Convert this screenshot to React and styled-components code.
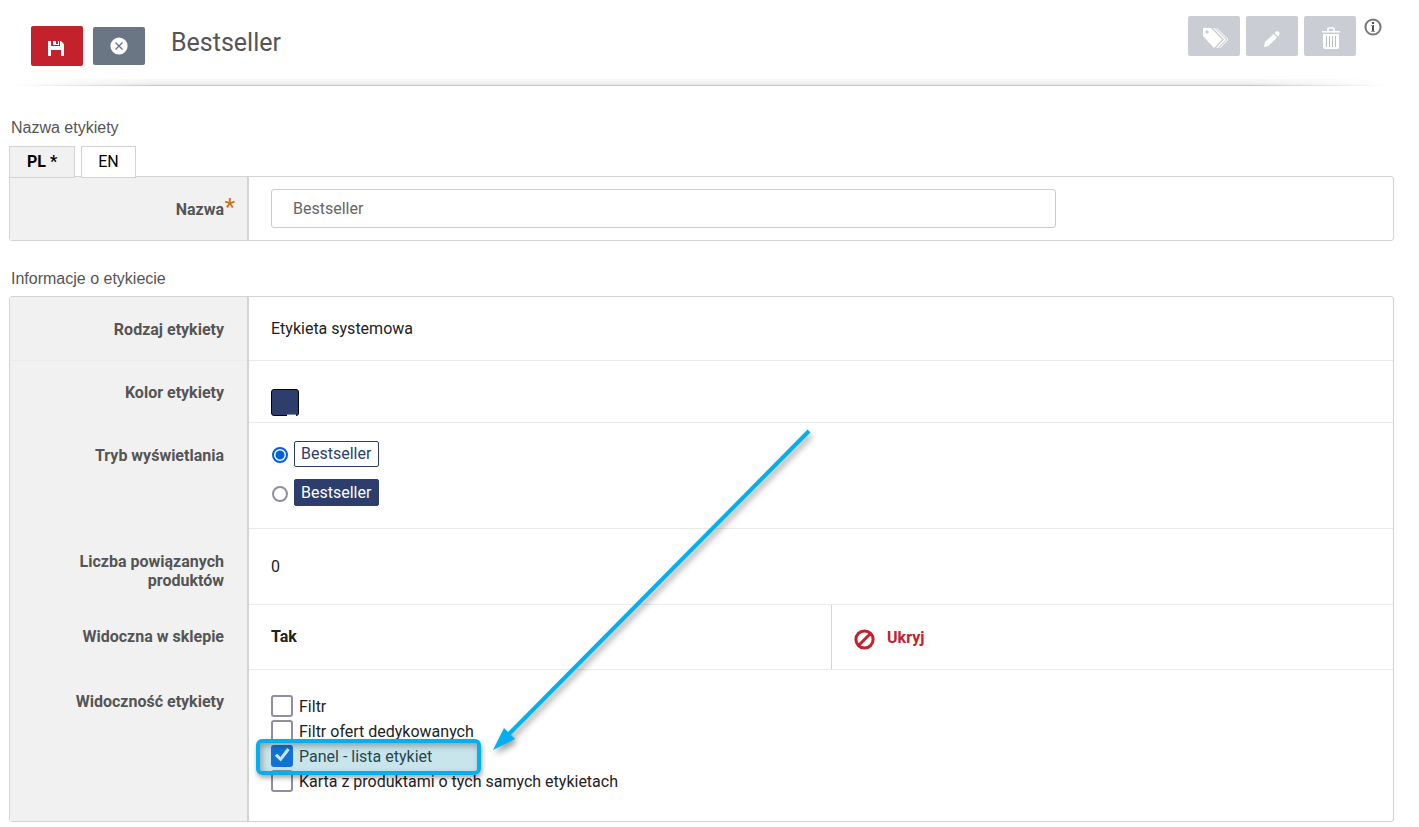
import React, { useState } from "react";
import styled, { createGlobalStyle, css } from "styled-components";

const GlobalStyle = createGlobalStyle`
  *, *::before, *::after { box-sizing: border-box; }
  body {
    margin: 0;
    background: #fff;
    color: #222;
    font: 16px/19px Roboto, "Open Sans", sans-serif;
  }
  button, input { font: inherit; }
`;

const Page = styled.div`
  overflow: hidden;
`;

const Header = styled.header`
  position: relative;
  display: flex;
  align-items: flex-start;
  height: 86px;
  padding: 0 37px 0 31px;

  &::after {
    content: "";
    position: absolute;
    inset: auto 0 0 0;
    height: 7px;
    border-bottom: 1px solid #c8c8c8;
    background: linear-gradient(#f7f7f7, #f3f3f3 60%, #e4e4e4);
    mask-image: linear-gradient(90deg, transparent 1%, #000 11%, #000 88%, transparent 98%);
  }
`;

const Actions = styled.div`
  display: flex;
  align-items: center;
  gap: ${(p) => p.$gap}px;
  padding-top: ${(p) => p.$top}px;
`;

const tones = { save: "#c3222d", cancel: "#6b7684", muted: "#caced4" };

const IconButton = styled.button`
  display: flex;
  align-items: center;
  justify-content: center;
  width: 52px;
  height: ${(p) => (p.$tone === "cancel" ? 38 : 40)}px;
  padding: ${(p) => (p.$tone === "muted" ? "4px 0 0 2px" : p.$tone === "save" ? "4px 2px 0 0" : "0")};
  border: 0;
  border-radius: 2px;
  background: ${(p) => tones[p.$tone]};
  color: #fff;
  cursor: pointer;
`;

const Title = styled.h1`
  flex: 1;
  margin: 0;
  padding: 28px 0 0 26px;
  color: #555;
  font-size: 25px;
  line-height: 30px;
  font-weight: 400;
`;

const InfoButton = styled.button`
  display: flex;
  margin: 18px 0 0 8px;
  padding: 0;
  border: 0;
  background: none;
  color: #777;
  cursor: pointer;
`;

const Main = styled.main`
  padding: 32px 25px 5px 9px;
`;

const Section = styled.section`
  & + & { margin-top: 28px; }
`;

const Heading = styled.h2`
  margin: 0 0 8px 2px;
  color: #555;
  font: 16px/19px "Liberation Sans", Arial, sans-serif;
`;

const Tabs = styled.div`
  position: relative;
  z-index: 1;
  display: flex;
  gap: 6px;
  padding-top: 1px;
  margin-bottom: -2px;
`;

const Tab = styled.button`
  height: 32px;
  padding: 0 ${(p) => (p.$active ? 17 : 16)}px 2px;
  border: 1px solid #d3d3d3;
  background: ${(p) => (p.$active ? "#f1f1f1" : "#fff")};
  color: #000;
  font-weight: ${(p) => (p.$active ? 700 : 400)};
  cursor: pointer;
`;

const Panel = styled.div`
  border: 1px solid #d3d3d3;
  border-radius: 3px;
`;

const Row = styled.div`
  display: flex;
  min-height: ${(p) => p.$height}px;
`;

const labelStyle = css`
  flex: none;
  width: 239px;
  padding: ${(p) => p.$top ?? 23}px 23px 0 50px;
  border-right: 2px solid #d3d3d3;
  background: #f1f1f1;
  color: #555;
  font-weight: 700;
  text-align: right;
`;
const RowLabel = styled.div`
  ${labelStyle}
  box-shadow: ${(p) => (p.$ruled ? "inset 0 -1px #ebebeb" : "none")};
`;
const FieldLabel = styled.label`
  ${labelStyle}
  display: flex;
  justify-content: flex-end;
  padding-right: 12px;
`;

const Required = styled.span`
  width: 11px;
  color: #d06a10;
  font-size: 24px;
  line-height: 14px;
  font-weight: 400;
`;

const Value = styled.div`
  position: relative;
  flex: ${(p) => p.$share ?? 1} 1 0;
  min-width: 0;
  padding: ${(p) => p.$top}px 23px 0 22px;
  border-left: ${(p) => (p.$divided ? "1px solid #d3d3d3" : "0")};
  font-weight: ${(p) => (p.$bold ? 700 : 400)};
  border-bottom: 1px solid #ebebeb;
  ${Row}:last-child > & { border-bottom: 0; }
`;

const TextInput = styled.input`
  display: block;
  width: 100%;
  max-width: 785px;
  height: 39px;
  padding: 0 21px;
  border: 1px solid #ccc;
  border-radius: 3px;
  background: #fff;
  color: #666;
`;

const Swatch = styled.button`
  position: relative;
  display: block;
  width: 28px;
  height: 27px;
  padding: 0;
  border: 1px solid #000;
  border-radius: 3px;
  background: #2d3e6d;
  cursor: pointer;

  &::after {
    content: "";
    position: absolute;
    right: 2px;
    bottom: -1px;
    width: 9px;
    height: 2px;
    border-top: 1px solid #8088a5;
    background: #fff;
  }
`;

const ModeOption = styled.label`
  display: flex;
  align-items: center;
  gap: 6px;
  width: max-content;
  & + & { margin-top: 12px; }
`;

const Radio = styled.input`
  appearance: none;
  width: 16px;
  height: 16px;
  margin: 2px 0 0 1px;
  border: 2px solid #8f8f9d;
  border-radius: 50%;
  background: #fff;
  &:checked {
    border-color: #0060df;
    background: radial-gradient(circle, #0060df 4px, #fff 5px);
  }
`;

const Badge = styled.span`
  padding: 3px 7px 3px 6px;
  border: 1px solid #2d3e6d;
  border-radius: 2px;
  line-height: ${(p) => (p.$filled ? 19 : 18)}px;
  background: ${(p) => (p.$filled ? "#2d3e6d" : "#fff")};
  color: ${(p) => (p.$filled ? "#fff" : "#2d3e6d")};
`;

const HideLink = styled.a`
  display: inline-flex;
  align-items: flex-start;
  gap: 12px;
  color: #c3222d;
  font-weight: 700;
  text-decoration: none;
  svg { margin-top: 1px; }
`;

const CheckOption = styled.label`
  display: flex;
  align-items: center;
  gap: 6px;
  width: max-content;
  height: 25px;
`;

const Checkbox = styled.input`
  appearance: none;
  display: grid;
  place-items: center;
  width: 22px;
  height: 22px;
  margin: 0 0 2px;
  border: 2px solid #8f8f9d;
  border-radius: 3px;
  background: #fff;
  &:checked {
    border-color: #0060df;
    background: #0060df;
  }
  &:checked::before {
    content: "";
    width: 18px;
    height: 18px;
    background: #fff;
    clip-path: polygon(10% 52%, 23% 40%, 41% 58%, 79% 9%, 93% 20%, 43% 84%);
  }
`;

const Highlight = styled.div`
  position: absolute;
  top: 69px;
  left: 7px;
  width: 225px;
  height: 36px;
  border: 4px solid #00b0f0;
  border-radius: 6px;
  background: rgba(60, 160, 185, 0.28);
  box-shadow: 1px 3px 5px rgba(0, 0, 0, 0.35), inset 2px 3px 6px rgba(0, 0, 0, 0.3);
  pointer-events: none;
`;

const Pointer = styled.svg`
  position: absolute;
  top: -250px;
  left: 235px;
  filter: drop-shadow(2px 4px 3px rgba(0, 0, 0, 0.4));
  pointer-events: none;
`;

const SaveIcon = () => (
  <svg width="16" height="16" viewBox="0 0 16 16" fill="currentColor" aria-hidden="true">
    <path d="M0 1h3v5h9V1h1l3 3v12h-3v-6H3v6H0z" />
    <path d="M5 1h3v3h2V1h1v4H5z" />
  </svg>
);
const CancelIcon = () => (
  <svg width="18" height="18" viewBox="0 0 18 18" aria-hidden="true">
    <circle cx="9" cy="9" r="8.6" fill="currentColor" />
    <path d="M5.5 5.5l7 7m0-7l-7 7" stroke="#6b7684" strokeWidth="1.4" />
  </svg>
);
const TagsIcon = () => (
  <svg width="26" height="22" viewBox="0 0 26 22" fill="currentColor" aria-hidden="true">
    <path fillRule="evenodd" d="M1 2q0-1 1-1h7l11 11.5-8 8.5L1 9zM5 3.2a1.7 1.7 0 1 0 .1 0z" />
    <path d="M11 1h1.6L24 12.500l-8 8.500h-2l8-8.500z" />
    <path d="M14 1h1l11.400 11.500-8 8.500h-1l8-8.500z" />
  </svg>
);
const PencilIcon = () => (
  <svg width="18" height="18" viewBox="0 0 18 18" fill="currentColor" aria-hidden="true">
    <path d="M0 18l1-5 8.500-8 3.500 3.500-8.500 8.500z" />
    <path d="M10.500 4l1.500-1.600q1-.8 2 0l1.300 1.300q.8 1 0 2L14 7.500z" />
  </svg>
);
const TrashIcon = () => (
  <svg width="20" height="23" viewBox="0 0 20 23" aria-hidden="true">
    <path d="M7 4V2q0-1 1-1h4q1 0 1 1v2" fill="none" stroke="currentColor" strokeWidth="1.6" />
    <path d="M1 4h18v1.500H1z" fill="currentColor" />
    <path d="M2 7h16v13q0 2-2 2H4q-2 0-2-2z" fill="currentColor" />
    <path d="M5 9h1v11H5zM8 9h1v11H8zM11 9h1v11h-1zM14 9h1v11h-1z" fill="#b9bec6" />
  </svg>
);
const InfoIcon = () => (
  <svg width="18" height="18" viewBox="0 0 18 18" fill="none" aria-hidden="true">
    <circle cx="9" cy="9" r="7.6" stroke="currentColor" strokeWidth="2" />
    <path d="M9 7v6M8 5h2" stroke="#555" strokeWidth="2" />
    <path d="M7 7.500h2M7 13.500h4" stroke="#999" strokeWidth="1" />
  </svg>
);
const BanIcon = () => (
  <svg width="21" height="21" viewBox="0 0 21 21" fill="none" stroke="currentColor" strokeWidth="3" aria-hidden="true">
    <circle cx="10.5" cy="10.5" r="8.6" />
    <path d="M4.5 16.5l12-12" />
  </svg>
);

const visibility = [
  ["filter", "Filtr"],
  ["dedicated", "Filtr ofert dedykowanych"],
  ["panel", "Panel - lista etykiet"],
  ["card", "Karta z produktami o tych samych etykietach"],
];

export default function App() {
  const [lang, setLang] = useState("PL *");
  const [name, setName] = useState("Bestseller");
  const [mode, setMode] = useState("outline");
  const [checked, setChecked] = useState({ panel: true });

  return (
    <Page>
      <GlobalStyle />
      <Header>
        <Actions $gap={10} $top={26}>
          <IconButton $tone="save" aria-label="Zapisz"><SaveIcon /></IconButton>
          <IconButton $tone="cancel" aria-label="Anuluj"><CancelIcon /></IconButton>
        </Actions>
        <Title>Bestseller</Title>
        <Actions $gap={6} $top={16}>
          <IconButton $tone="muted" aria-label="Etykiety"><TagsIcon /></IconButton>
          <IconButton $tone="muted" aria-label="Edytuj"><PencilIcon /></IconButton>
          <IconButton $tone="muted" aria-label="Usuń"><TrashIcon /></IconButton>
        </Actions>
        <InfoButton aria-label="Informacje"><InfoIcon /></InfoButton>
      </Header>

      <Main>
        <Section>
          <Heading>Nazwa etykiety</Heading>
          <Tabs role="tablist">
            {["PL *", "EN"].map((t) => (
              <Tab key={t} role="tab" aria-selected={lang === t} $active={lang === t} onClick={() => setLang(t)}>
                {t}
              </Tab>
            ))}
          </Tabs>
          <Panel>
            <Row $height={63}>
              <FieldLabel htmlFor="name">Nazwa<Required>*</Required></FieldLabel>
              <Value $top={12}>
                <TextInput id="name" value={name} onChange={(e) => setName(e.target.value)} />
              </Value>
            </Row>
          </Panel>
        </Section>

        <Section>
          <Heading>Informacje o etykiecie</Heading>
          <Panel>
            <Row $height={64}>
              <RowLabel $ruled>Rodzaj etykiety</RowLabel>
              <Value $top={22}>Etykieta systemowa</Value>
            </Row>
            <Row $height={62}>
              <RowLabel $top={22}>Kolor etykiety</RowLabel>
              <Value $top={28}><Swatch aria-label="Kolor etykiety" /></Value>
            </Row>
            <Row $height={106}>
              <RowLabel>Tryb wyświetlania</RowLabel>
              <Value $top={18}>
                <ModeOption>
                  <Radio type="radio" name="mode" checked={mode === "outline"} onChange={() => setMode("outline")} />
                  <Badge>Bestseller</Badge>
                </ModeOption>
                <ModeOption>
                  <Radio type="radio" name="mode" checked={mode === "filled"} onChange={() => setMode("filled")} />
                  <Badge $filled>Bestseller</Badge>
                </ModeOption>
              </Value>
            </Row>
            <Row $height={76}>
              <RowLabel>Liczba powiązanych produktów</RowLabel>
              <Value $top={28}>0</Value>
            </Row>
            <Row $height={65}>
              <RowLabel $top={22}>Widoczna w sklepie</RowLabel>
              <Value $share={51} $top={22} $bold>Tak</Value>
              <Value $share={49} $top={23} $divided>
                <HideLink href="#hide"><BanIcon />Ukryj</HideLink>
              </Value>
            </Row>
            <Row $height={151}>
              <RowLabel $top={22}>Widoczność etykiety</RowLabel>
              <Value $top={24}>
                {visibility.map(([key, text]) => (
                  <CheckOption key={key}>
                    <Checkbox
                      type="checkbox"
                      checked={!!checked[key]}
                      onChange={(e) => setChecked({ ...checked, [key]: e.target.checked })}
                    />
                    {text}
                  </CheckOption>
                ))}
                <Highlight />
                <Pointer width="340" height="340" viewBox="0 0 340 340" aria-hidden="true">
                  <path d="M325 11L24 315" stroke="#00b0f0" strokeWidth="4" />
                  <path d="M9 330l11-22 11 11z" fill="#00b0f0" />
                </Pointer>
              </Value>
            </Row>
          </Panel>
        </Section>
      </Main>
    </Page>
  );
}
